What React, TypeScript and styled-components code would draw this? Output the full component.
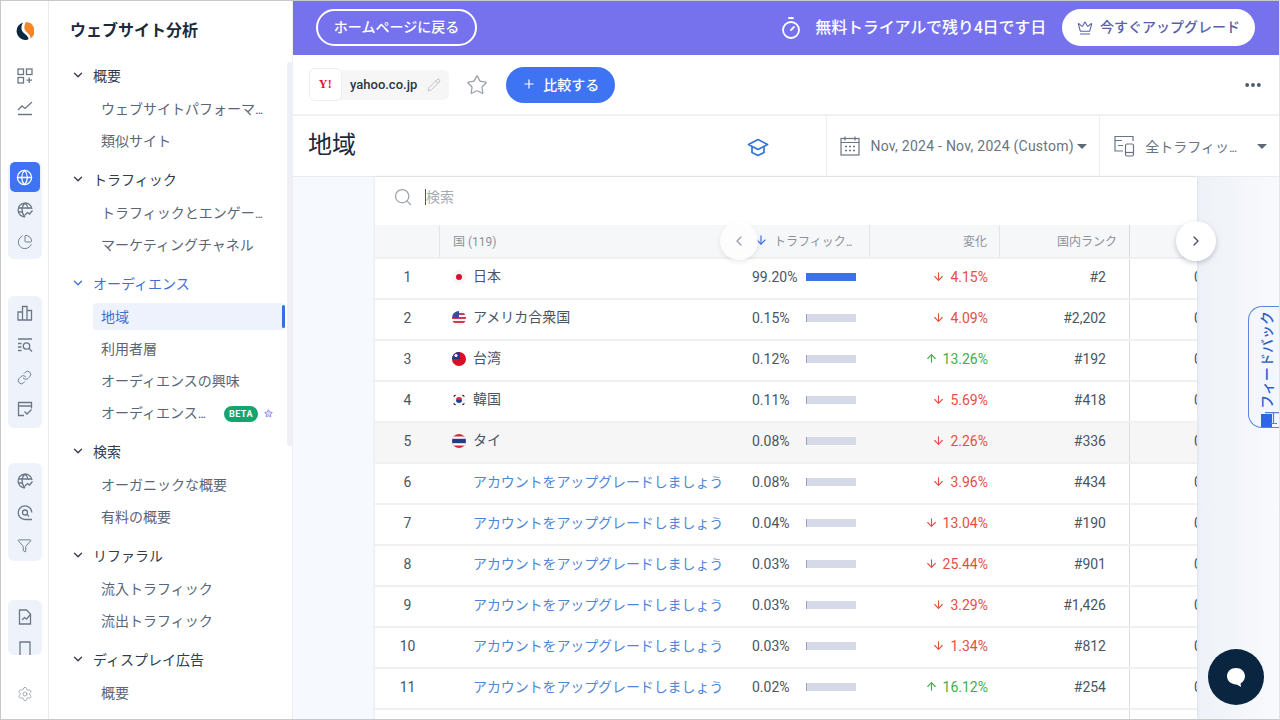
import styled, { createGlobalStyle } from 'styled-components';
import {
  ArrowDown,
  ArrowUp,
  ChartPie,
  ChevronDown,
  ChevronLeft,
  ChevronRight,
  Crown,
  Ellipsis,
  Funnel,
  Globe,
  Link,
  Pencil,
  Plus,
  Search,
  Settings,
  Star,
  Timer,
} from 'lucide-react';

const GlobalStyle = createGlobalStyle`
  html, body {
    margin: 0;
    overflow: hidden;
  }
  body {
    font-family: Roboto, "Noto Sans CJK JP", sans-serif;
  }
  * {
    box-sizing: border-box;
  }
`;

const Frame = styled.div`
  width: 1280px;
  height: 720px;
  display: flex;
  position: relative;
  overflow: hidden;
  background: #fff;
  border: 1px solid #c9c9c9;
  border-right-color: #e4e4e4;
`;

/* left icon rail */
const Rail = styled.aside`
  width: 48px;
  flex: none;
  display: flex;
  flex-direction: column;
  align-items: center;
  padding-top: 14px;
  border-right: 1px solid #e9ebef;
  color: #6b7787;
`;

const RailCell = styled.div`
  width: 34px;
  height: 32px;
  display: flex;
  align-items: center;
  justify-content: center;
`;

const ActiveCell = styled(RailCell)`
  width: 30px;
  height: 30px;
  margin: 0 auto 2px;
  border-radius: 5px;
  background: #3e74f4;
  color: #fff;
`;

const RailGroup = styled.div<{ $top: number; $height: number; $pad: number }>`
  width: 34px;
  height: ${(p) => p.$height}px;
  margin-top: ${(p) => p.$top}px;
  padding-top: ${(p) => p.$pad}px;
  overflow: hidden;
  background: #eef3fb;
  border-radius: 6px;
`;

const RailFoot = styled(RailCell)`
  margin-top: auto;
  margin-bottom: 9px;
  color: #8f99a8;
`;

const LogoCell = styled(RailCell)`
  margin-bottom: 13px;
`;

const TopTools = styled.div`
  margin-bottom: 38px;
`;

/* navigation column */
const Nav = styled.nav`
  width: 244px;
  flex: none;
  position: relative;
  padding: 14px 0 0 21px;
  border-right: 1px solid #eceef3;
  overflow: hidden;
`;

const NavTitle = styled.h2`
  margin: 0 0 13px;
  font-size: 16px;
  line-height: 32px;
  font-weight: 700;
  color: #1d2a3a;
`;

const NavSection = styled.div`
  margin-bottom: 8px;
`;

const NavHead = styled.div<{ $active?: boolean }>`
  height: 32px;
  display: flex;
  align-items: center;
  gap: 8px;
  margin-left: 1px;
  padding-bottom: 2px;
  font-size: 14px;
  color: ${(p) => (p.$active ? '#3f6fd6' : '#2f3c4e')};
`;

const NavItem = styled.div<{ $active?: boolean }>`
  height: 32px;
  width: 192px;
  margin-left: 23px;
  padding-left: 8px;
  display: flex;
  align-items: center;
  font-size: 14px;
  white-space: nowrap;
  position: relative;
  color: ${(p) => (p.$active ? '#3f6fd6' : '#5a6676')};

  ${(p) =>
    p.$active &&
    `
    &::before {
      content: '';
      position: absolute;
      inset: 3px 0 2px 0;
      background: #eef2fd;
      border-radius: 4px;
    }
    &::after {
      content: '';
      position: absolute;
      right: 0;
      top: 5px;
      bottom: 4px;
      width: 3px;
      background: #3d6be0;
      border-radius: 2px;
    }
  `}
`;

const NavText = styled.span`
  position: relative;
`;

const Dots = styled.span`
  letter-spacing: -1.3px;
`;

const BetaBadge = styled.span`
  position: absolute;
  left: 131px;
  top: 10px;
  height: 16px;
  width: 34px;
  border-radius: 8px;
  background: #12a56f;
  color: #fff;
  font-size: 9px;
  font-weight: 700;
  letter-spacing: 0.5px;
  text-align: center;
  line-height: 16px;
`;

const BetaStar = styled.span`
  position: absolute;
  left: 171px;
  top: 13px;
  color: #7b78e6;
  display: flex;
`;

const NavThumb = styled.div`
  position: absolute;
  right: 0;
  top: 61px;
  width: 5px;
  height: 384px;
  background: #eef0f5;
  border-radius: 3px;
`;

/* main column */
const Main = styled.main`
  flex: 1;
  min-width: 0;
  display: flex;
  flex-direction: column;
`;

const Banner = styled.div`
  height: 54px;
  flex: none;
  display: flex;
  align-items: center;
  padding: 0 24px 1px 23px;
  background: #7672ee;
  color: #fff;
`;

const BackButton = styled.div`
  width: 161px;
  height: 37px;
  padding-bottom: 3px;
  border: 2px solid #fff;
  border-radius: 19px;
  display: flex;
  align-items: center;
  justify-content: center;
  font-size: 14px;
  font-weight: 500;
`;

const TrialNote = styled.div`
  margin-left: auto;
  display: flex;
  align-items: center;
  gap: 12px;
  font-size: 16px;
  font-weight: 500;
  letter-spacing: -0.15px;
`;

const TrialText = styled.span`
  padding-bottom: 3px;
`;

const UpgradeButton = styled.div`
  width: 193px;
  height: 37px;
  margin-left: 16px;
  border-radius: 19px;
  background: #fff;
  color: #5c5fa8;
  display: flex;
  align-items: center;
  justify-content: center;
  gap: 7px;
  font-size: 14px;
  font-weight: 500;
`;

const UpgradeText = styled.span`
  padding-bottom: 3px;
`;

const Toolbar = styled.div`
  height: 61px;
  flex: none;
  display: flex;
  align-items: center;
  padding: 0 16px;
  border-bottom: 2px solid #f0f1f3;
`;

const SiteChip = styled.div`
  height: 30px;
  display: flex;
  align-items: center;
  background: #f6f6f7;
  border-radius: 6px;
  padding-right: 8px;
`;

const SiteLogo = styled.div`
  width: 33px;
  height: 33px;
  border: 1px solid #eeeeef;
  border-radius: 6px;
  background: #fff;
  display: flex;
  align-items: center;
  justify-content: center;
  color: #e0123e;
  font-family: "Liberation Serif", serif;
  font-size: 12px;
  font-weight: 700;
  letter-spacing: 0.5px;
`;

const SiteName = styled.span`
  margin: 0 10px 0 8px;
  font-size: 13px;
  font-weight: 500;
  color: #2b3646;
`;

const FavStar = styled.div`
  margin: 0 18px 0 17px;
  display: flex;
  color: #9aa1ac;
`;

const CompareButton = styled.div`
  width: 109px;
  height: 36px;
  padding-bottom: 2px;
  border-radius: 18px;
  background: #3e74f4;
  color: #fff;
  display: flex;
  align-items: center;
  justify-content: center;
  gap: 7px;
  font-size: 14px;
  font-weight: 500;
`;

const More = styled.div`
  margin-left: auto;
  display: flex;
  color: #4a5666;
`;

const TitleBar = styled.div`
  height: 61px;
  flex: none;
  display: flex;
  align-items: center;
  border-bottom: 1px solid #e9ebee;
`;

const PageTitle = styled.h1`
  margin: 0;
  padding: 0 0 8px 15px;
  width: 454px;
  font-size: 24px;
  font-weight: 400;
  color: #1d2a3a;
`;

const CapIcon = styled.div`
  width: 80px;
  padding-top: 2px;
  display: flex;
  color: #2f73d8;
`;

const FilterCell = styled.div<{ $width: number }>`
  width: ${(p) => p.$width}px;
  height: 100%;
  display: flex;
  align-items: center;
  gap: 10px;
  padding-left: 13px;
  border-left: 1px solid #eceef1;
  color: #6a7482;
  font-size: 14px;
  white-space: nowrap;
`;

const DateText = styled.span`
  letter-spacing: 0.25px;
`;

const Caret = styled.span<{ $left: number }>`
  margin-left: ${(p) => p.$left}px;
  width: 0;
  height: 0;
  border-left: 5px solid transparent;
  border-right: 5px solid transparent;
  border-top: 5px solid #5d6876;
`;

const Content = styled.div`
  flex: 1;
  min-height: 0;
  position: relative;
  background: linear-gradient(90deg, #f6f9fe 0, #f6f9fe 82px, #fff 82px);
  padding: 0 82px;
`;

const RightGutter = styled.div`
  position: absolute;
  top: 0;
  right: 0;
  bottom: 0;
  width: 82px;
  background: linear-gradient(90deg, #eef1f7, #f8fafd);
`;

const Card = styled.section`
  position: relative;
  height: 100%;
  background: #fff;
  overflow: hidden;
  box-shadow: 0 0 3px rgba(60, 70, 110, 0.14);
`;

const SearchRow = styled.div`
  height: 48px;
  display: flex;
  align-items: center;
  gap: 12px;
  padding: 0 0 8px 18px;
  color: #9da3ad;
  font-size: 14px;
`;

const Placeholder = styled.span`
  border-left: 1px solid #4a5666;
  line-height: 16px;
  color: #a7acb5;
`;

const Row = styled.div<{ $head?: boolean; $hover?: boolean }>`
  display: grid;
  grid-template-columns: 64px 301px 129px 130px 130px 68px;
  align-items: center;
  height: ${(p) => (p.$head ? 34 : 41)}px;
  font-size: ${(p) => (p.$head ? 12 : 14)}px;
  color: ${(p) => (p.$head ? '#8a929e' : '#4a5564')};
  background: ${(p) => (p.$head ? '#f6f7f8' : p.$hover ? '#f6f6f7' : '#fff')};
  border-bottom: 2px solid #eef0f2;
  white-space: nowrap;

  ${(p) => p.$head && '& > div { padding-bottom: 2px; }'}
`;

const Cell = styled.div<{ $line?: boolean; $strong?: boolean }>`
  height: 100%;
  padding-bottom: 4px;
  display: flex;
  align-items: center;
  border-left: ${(p) => (p.$strong ? '1px solid #d9dbdf' : p.$line ? '1px solid #e2e4e8' : 'none')};
`;

const RankCell = styled(Cell)`
  justify-content: center;
  padding-left: 1px;
`;

const CountryCell = styled(Cell)`
  gap: 7px;
  padding-left: 13px;
`;

const CountryName = styled.span`
  padding-bottom: 4px;
`;

const UpgradeLink = styled.span`
  margin-left: 21px;
  padding-bottom: 2px;
  letter-spacing: -0.1px;
  color: #4f86d8;
`;

const TrafficCell = styled(Cell)`
  padding-left: 12px;
`;

const Percent = styled.span`
  width: 54px;
  flex: none;
`;

const BarTrack = styled.div`
  width: 50px;
  height: 8px;
  background: #d6dae8;
`;

const BarFill = styled.div<{ $full: boolean }>`
  height: 100%;
  background: ${(p) => (p.$full ? '#3d72e6' : '#97a0c0')};
`;

const ChangeCell = styled(Cell)<{ $up: boolean }>`
  justify-content: flex-end;
  gap: 5px;
  padding-right: 11px;
  color: ${(p) => (p.$up ? '#3fae49' : '#e2503f')};
`;

const EndCell = styled(Cell)`
  justify-content: flex-end;
  padding-right: 23px;
`;

const HeadRight = styled(Cell)`
  justify-content: flex-end;
  padding-right: 12px;
`;

const CutCell = styled(Cell)`
  padding-left: 64px;
`;

const SortHead = styled(Cell)`
  padding-left: 14px;
  gap: 6px;
`;

const ScrollArrow = styled.div<{ $side: 'left' | 'right' }>`
  position: absolute;
  top: ${(p) => (p.$side === 'left' ? 45 : 44)}px;
  left: ${(p) => (p.$side === 'left' ? 345 : 883)}px;
  width: ${(p) => (p.$side === 'left' ? 38 : 40)}px;
  height: ${(p) => (p.$side === 'left' ? 38 : 40)}px;
  border-radius: 50%;
  display: flex;
  align-items: center;
  justify-content: center;
  background: ${(p) => (p.$side === 'left' ? 'rgba(255,255,255,0.75)' : '#fff')};
  color: ${(p) => (p.$side === 'left' ? '#9aa1ac' : '#4a5564')};
  box-shadow: 0 2px 5px rgba(40, 50, 70, ${(p) => (p.$side === 'left' ? 0.1 : 0.25)});
`;

const FeedbackTab = styled.div`
  position: absolute;
  right: -1px;
  top: 305px;
  width: 32px;
  height: 122px;
  padding: 4px 0 0 2px;
  border: 1px solid #5b86dd;
  border-right: none;
  border-radius: 14px 0 0 14px;
  background: #f3f6fd;
  display: flex;
  justify-content: center;
  align-items: flex-start;
`;

const FeedbackText = styled.span`
  white-space: nowrap;
  writing-mode: vertical-rl;
  text-orientation: sideways;
  transform: rotate(180deg);
  color: #2f5fc8;
  font-size: 14px;
  font-weight: 500;
`;

const FeedbackIcon = styled.span`
  position: absolute;
  left: 12px;
  bottom: 0;
  display: flex;
`;

const ChatButton = styled.div`
  position: absolute;
  left: 1207px;
  top: 648px;
  width: 56px;
  height: 56px;
  border-radius: 50%;
  background: #092540;
  display: flex;
  align-items: center;
  justify-content: center;
`;

type Section = {
  title: string;
  active?: boolean;
  items: string[];
};

const sections: Section[] = [
  { title: '概要', items: ['ウェブサイトパフォーマ...', '類似サイト'] },
  { title: 'トラフィック', items: ['トラフィックとエンゲー...', 'マーケティングチャネル'] },
  {
    title: 'オーディエンス',
    active: true,
    items: ['地域', '利用者層', 'オーディエンスの興味', 'オーディエンス...'],
  },
  { title: '検索', items: ['オーガニックな概要', '有料の概要'] },
  { title: 'リファラル', items: ['流入トラフィック', '流出トラフィック'] },
  { title: 'ディスプレイ広告', items: ['概要'] },
];

const rows = [
  { country: '日本', flag: 'jp', share: '99.20%', width: 100, change: '4.15%', up: false, rank: '#2' },
  { country: 'アメリカ合衆国', flag: 'us', share: '0.15%', width: 2, change: '4.09%', up: false, rank: '#2,202' },
  { country: '台湾', flag: 'tw', share: '0.12%', width: 2, change: '13.26%', up: true, rank: '#192' },
  { country: '韓国', flag: 'kr', share: '0.11%', width: 2, change: '5.69%', up: false, rank: '#418' },
  { country: 'タイ', flag: 'th', share: '0.08%', width: 2, change: '2.26%', up: false, rank: '#336' },
  { country: '', flag: '', share: '0.08%', width: 2, change: '3.96%', up: false, rank: '#434' },
  { country: '', flag: '', share: '0.04%', width: 2, change: '13.04%', up: false, rank: '#190' },
  { country: '', flag: '', share: '0.03%', width: 2, change: '25.44%', up: false, rank: '#901' },
  { country: '', flag: '', share: '0.03%', width: 2, change: '3.29%', up: false, rank: '#1,426' },
  { country: '', flag: '', share: '0.03%', width: 2, change: '1.34%', up: false, rank: '#812' },
  { country: '', flag: '', share: '0.02%', width: 2, change: '16.12%', up: true, rank: '#254' },
  { country: '', flag: '', share: '', width: 0, change: '', up: false, rank: '' },
];

// tightens the trailing dots of a cut label
function Clipped({ text }: { text: string }) {
  if (!text.endsWith('...')) return <>{text}</>;
  return (
    <>
      {text.slice(0, -3)}
      <Dots>...</Dots>
    </>
  );
}

function Flag({ code }: { code: string }) {
  return (
    <svg width="14" height="14" viewBox="0 0 14 14">
      <defs>
        <clipPath id={`flag-${code}`}>
          <circle cx="7" cy="7" r="7" />
        </clipPath>
      </defs>
      <g clipPath={`url(#flag-${code})`}>
        <rect width="14" height="14" fill="#f6f6f6" />
        {code === 'jp' && <circle cx="7" cy="7" r="3" fill="#d80f30" />}
        {code === 'us' && (
          <>
            <rect y="2" width="14" height="2" fill="#d33a4a" />
            <rect y="6" width="14" height="2" fill="#d33a4a" />
            <rect y="10" width="14" height="2" fill="#d33a4a" />
            <rect width="7" height="7" fill="#33509c" />
          </>
        )}
        {code === 'tw' && (
          <>
            <rect width="14" height="14" fill="#d80f27" />
            <rect width="8" height="7" fill="#1c3a94" />
            <circle cx="4" cy="3.5" r="1.6" fill="#fff" />
          </>
        )}
        {code === 'kr' && (
          <>
            <path d="M4 7a3 3 0 0 1 6 0z" fill="#cf2b3f" />
            <path d="M4 7a3 3 0 0 0 6 0z" fill="#26408c" />
            <path d="M1.5 3.5l2 -1.5M1.5 10.500l2 1.500M10.500 2l2 1.500M10.500 12l2 -1.500" stroke="#222" strokeWidth="1.400" />
          </>
        )}
        {code === 'th' && (
          <>
            <rect width="14" height="14" fill="#d3283a" />
            <rect y="2.500" width="14" height="9" fill="#fff" />
            <rect y="4.800" width="14" height="4.400" fill="#263a86" />
          </>
        )}
      </g>
    </svg>
  );
}

function LogoMark() {
  return (
    <svg width="18" height="18" viewBox="0 0 18 18">
      <path d="M10 0a9 9 0 0 1 4.500 16.500C15 12 9 10 8.500 7 8 4 9 1.500 10 0z" fill="#f58426" />
      <path d="M7 .4A9 9 0 0 0 9 18c1.500 0 3-.4 3.500-1 0-4-6.500-5.500-7-10C5.200 4.500 6 2 7 .4z" fill="#0a2742" />
    </svg>
  );
}

function GridPlusIcon() {
  return (
    <svg width="16" height="16" viewBox="0 0 16 16" fill="none" stroke="currentColor" strokeWidth="1.300">
      <rect x="1" y="1" width="5.500" height="5.500" />
      <rect x="9.500" y="1" width="5.500" height="5.500" />
      <rect x="1" y="9.500" width="5.500" height="5.500" />
      <path d="M12.200 9.500v5.500M9.500 12.200h5.500" />
    </svg>
  );
}

function TrendIcon() {
  return (
    <svg width="16" height="16" viewBox="0 0 16 16" fill="none" stroke="currentColor" strokeWidth="1.300">
      <path d="M1 10l4-4 3 2.500L15 2M1 14.500h14" />
    </svg>
  );
}

function GlobeTrendIcon() {
  return (
    <svg width="16" height="16" viewBox="0 0 16 16" fill="none" stroke="currentColor" strokeWidth="1.300">
      <path d="M8 15A7 7 0 1 1 15 7M1 6h14M1.500 10h4M8 1c-4 3.500-4 9 0 14M8 1c2 1.700 3 3.700 3.200 6" />
      <path d="M8 13l2.500-2.500 2 1.500 3-3.500" />
    </svg>
  );
}

function BarsIcon() {
  return (
    <svg width="16" height="16" viewBox="0 0 16 16" fill="none" stroke="currentColor" strokeWidth="1.300">
      <path d="M1 15V7h4.500v8M5.500 15V1.500H10V15M10 15V5.500h4.500V15M.5 15h14.500" />
    </svg>
  );
}

function ListSearchIcon() {
  return (
    <svg width="16" height="16" viewBox="0 0 16 16" fill="none" stroke="currentColor" strokeWidth="1.300">
      <path d="M1 2h14M1 6.500h3.500M1 10h3.500M1 13.500h3.500" />
      <circle cx="9.500" cy="9" r="3.200" />
      <path d="M11.800 11.300L15 14.500" />
    </svg>
  );
}

function NoteCheckIcon() {
  return (
    <svg width="16" height="16" viewBox="0 0 16 16" fill="none" stroke="currentColor" strokeWidth="1.300">
      <path d="M7 14.500H1.500v-13h13v6M1.500 5h13" />
      <path d="M7.500 10.500l2.500 2.500 4.500-4.500" />
    </svg>
  );
}

function SearchRingIcon() {
  return (
    <svg width="16" height="16" viewBox="0 0 16 16" fill="none" stroke="currentColor" strokeWidth="1.300">
      <path d="M15 14.500H8A6.800 6.800 0 1 1 14.800 7.500" />
      <circle cx="8" cy="7.500" r="2.500" />
      <path d="M10 9.500l2 2" />
    </svg>
  );
}

function ReportIcon() {
  return (
    <svg width="16" height="16" viewBox="0 0 16 16" fill="none" stroke="currentColor" strokeWidth="1.300">
      <path d="M9.500 1H2.500v14h11V5z" />
      <path d="M5 11l2.500-2.500 2 1.500 4-4.500" />
    </svg>
  );
}

function BookIcon() {
  return (
    <svg width="16" height="16" viewBox="0 0 16 16" fill="none" stroke="currentColor" strokeWidth="1.300">
      <path d="M3 15V1h10v14" />
    </svg>
  );
}

function DevicesIcon() {
  return (
    <svg width="22" height="22" viewBox="0 0 22 22" fill="none" stroke="currentColor" strokeWidth="1.200">
      <path d="M20 6V1.500H2V5.500h7M2 5.500V16h8M5 10.500h5" />
      <rect x="12.500" y="9" width="8" height="12" rx="1.500" />
      <path d="M12.500 17.500h8" />
    </svg>
  );
}

function CalendarIcon() {
  return (
    <svg width="20" height="20" viewBox="0 0 20 20" fill="none" stroke="currentColor" strokeWidth="1.200">
      <rect x="1" y="2.500" width="18" height="16.500" />
      <path d="M1 6.500h18M5 0.500v4M15 0.500v4" />
      <path d="M5 10.500h2M9 10.500h2M13 10.500h2M5 14.500h2M9 14.500h2M13 14.500h2" strokeWidth="1.500" />
    </svg>
  );
}

function CapGlyph() {
  return (
    <svg width="22" height="19" viewBox="0 0 22 19" fill="none" stroke="currentColor" strokeWidth="1.700">
      <path d="M11 1.500L20.500 6.500 11 11.500 1.500 6.500z" strokeLinejoin="round" />
      <path d="M5 9v5.500l6 3 6-3V9" strokeLinejoin="round" />
    </svg>
  );
}

function ChatBubble() {
  return (
    <svg width="22" height="22" viewBox="0 0 22 22">
      <path d="M11 2c5 0 9 3.500 9 8.300 0 3.400-2 5.800-4.400 7l.4 3.700-3.700-2.300C7 18.700 2 15.500 2 10.300 2 5.500 6 2 11 2z" fill="#fff" />
    </svg>
  );
}

function FeedbackGlyph() {
  return (
    <svg width="19" height="15" viewBox="0 0 19 15">
      <rect x="0" y="2" width="11" height="13" fill="#2f66e8" />
      <path d="M4 .7h14M12.500 .7v11M10 11.500h6" stroke="#5a7fc8" strokeWidth="1.200" fill="none" />
    </svg>
  );
}

export default function App() {
  return (
    <>
      <GlobalStyle />
      <Frame>
        <Rail>
          <LogoCell><LogoMark /></LogoCell>
          <TopTools>
            <RailCell><GridPlusIcon /></RailCell>
            <RailCell><TrendIcon /></RailCell>
          </TopTools>
          <RailGroup $top={0} $height={97} $pad={0}>
            <ActiveCell><Globe size={17} strokeWidth={1.8} /></ActiveCell>
            <RailCell><GlobeTrendIcon /></RailCell>
            <RailCell><ChartPie size={16} strokeWidth={1.4} /></RailCell>
          </RailGroup>
          <RailGroup $top={37} $height={132} $pad={1}>
            <RailCell><BarsIcon /></RailCell>
            <RailCell><ListSearchIcon /></RailCell>
            <RailCell><Link size={15} strokeWidth={1.5} /></RailCell>
            <RailCell><NoteCheckIcon /></RailCell>
          </RailGroup>
          <RailGroup $top={35} $height={98} $pad={2}>
            <RailCell><GlobeTrendIcon /></RailCell>
            <RailCell><SearchRingIcon /></RailCell>
            <RailCell><Funnel size={15} strokeWidth={1.5} /></RailCell>
          </RailGroup>
          <RailGroup $top={39} $height={55} $pad={1}>
            <RailCell><ReportIcon /></RailCell>
            <RailCell><BookIcon /></RailCell>
          </RailGroup>
          <RailFoot><Settings size={16} strokeWidth={1.2} /></RailFoot>
        </Rail>

        <Nav>
          <NavTitle>ウェブサイト分析</NavTitle>
          {sections.map((section) => (
            <NavSection key={section.title}>
              <NavHead $active={section.active}>
                <ChevronDown size={14} strokeWidth={2.2} />
                {section.title}
              </NavHead>
              {section.items.map((item) => (
                <NavItem key={item} $active={item === '地域'}>
                  <NavText><Clipped text={item} /></NavText>
                  {item === 'オーディエンス...' && (
                    <>
                      <BetaBadge>BETA</BetaBadge>
                      <BetaStar><Star size={9} fill="#d9d8fa" /></BetaStar>
                    </>
                  )}
                </NavItem>
              ))}
            </NavSection>
          ))}
          <NavThumb />
        </Nav>

        <Main>
          <Banner>
            <BackButton>ホームページに戻る</BackButton>
            <TrialNote>
              <Timer size={24} strokeWidth={1.8} />
              <TrialText>無料トライアルで残り4日です日</TrialText>
            </TrialNote>
            <UpgradeButton>
              <Crown size={16} strokeWidth={1.6} />
              <UpgradeText>今すぐアップグレード</UpgradeText>
            </UpgradeButton>
          </Banner>

          <Toolbar>
            <SiteChip>
              <SiteLogo>Y!</SiteLogo>
              <SiteName>yahoo.co.jp</SiteName>
              <Pencil size={14} color="#b6bac1" strokeWidth={1.5} />
            </SiteChip>
            <FavStar><Star size={22} strokeWidth={1.4} /></FavStar>
            <CompareButton>
              <Plus size={14} />
              比較する
            </CompareButton>
            <More><Ellipsis size={20} strokeWidth={2.6} /></More>
          </Toolbar>

          <TitleBar>
            <PageTitle>地域</PageTitle>
            <CapIcon><CapGlyph /></CapIcon>
            <FilterCell $width={273}>
              <CalendarIcon />
              <DateText>Nov, 2024 - Nov, 2024 (Custom)</DateText>
              <Caret $left={-7} />
            </FilterCell>
            <FilterCell $width={180}>
              <DevicesIcon />
              <span><Clipped text="全トラフィッ..." /></span>
              <Caret $left={11} />
            </FilterCell>
          </TitleBar>

          <Content>
            <RightGutter />
            <Card>
              <SearchRow>
                <Search size={20} strokeWidth={1.5} />
                <Placeholder>検索</Placeholder>
              </SearchRow>
              <Row $head>
                <Cell />
                <CountryCell $line>国 (119)</CountryCell>
                <SortHead>
                  <ArrowDown size={14} color="#3d6be0" />
                  <span><Clipped text="トラフィック..." /></span>
                </SortHead>
                <HeadRight $line>変化</HeadRight>
                <HeadRight $line>国内ランク</HeadRight>
                <Cell $strong />
              </Row>
              {rows.map((row, index) => (
                <Row key={index} $hover={index === 4}>
                  <RankCell>{row.share && index + 1}</RankCell>
                  <CountryCell>
                    {row.flag ? (
                      <>
                        <Flag code={row.flag} />
                        <CountryName>{row.country}</CountryName>
                      </>
                    ) : (
                      row.share && <UpgradeLink>アカウントをアップグレードしましょう</UpgradeLink>
                    )}
                  </CountryCell>
                  <TrafficCell>
                    {row.share && (
                      <>
                        <Percent>{row.share}</Percent>
                        <BarTrack>
                          <BarFill $full={row.width === 100} style={{ width: `${row.width}%` }} />
                        </BarTrack>
                      </>
                    )}
                  </TrafficCell>
                  <ChangeCell $up={row.up}>
                    {row.change &&
                      (row.up ? <ArrowUp size={13} /> : <ArrowDown size={13} />)}
                    {row.change}
                  </ChangeCell>
                  <EndCell>{row.rank}</EndCell>
                  <CutCell $strong>{row.share && '0'}</CutCell>
                </Row>
              ))}
              <ScrollArrow $side="left"><ChevronLeft size={16} /></ScrollArrow>
            </Card>
            <ScrollArrow $side="right"><ChevronRight size={16} /></ScrollArrow>
          </Content>
        </Main>

        <FeedbackTab>
          <FeedbackText>フィードバック</FeedbackText>
          <FeedbackIcon><FeedbackGlyph /></FeedbackIcon>
        </FeedbackTab>
        <ChatButton><ChatBubble /></ChatButton>
      </Frame>
    </>
  );
}
